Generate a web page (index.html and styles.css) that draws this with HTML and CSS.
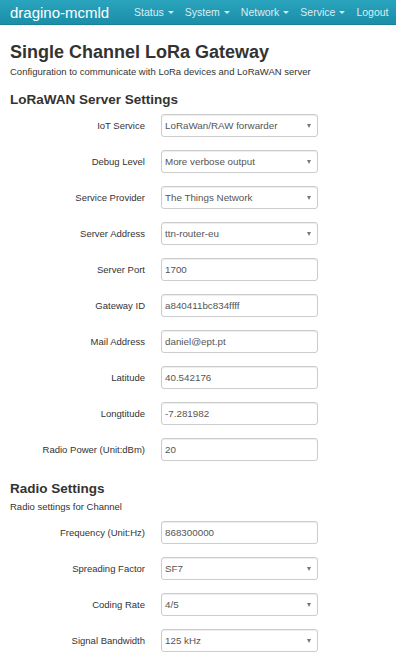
FILE: index.html
```html
<!DOCTYPE html>
<html>
<head>
<meta charset="utf-8">
<link rel="stylesheet" href="styles.css">
</head>
<body>
<header class="navbar">
  <span class="brand">dragino-mcmld</span>
  <nav class="nav">
    <span class="nav-item">Status<i class="caret"></i></span>
    <span class="nav-item">System<i class="caret"></i></span>
    <span class="nav-item">Network<i class="caret"></i></span>
    <span class="nav-item">Service<i class="caret"></i></span>
    <span class="nav-item">Logout</span>
  </nav>
</header>
<main class="content">
  <h1 class="title">Single Channel LoRa Gateway</h1>
  <p class="desc">Configuration to communicate with LoRa devices and LoRaWAN server</p>

  <h2 class="section">LoRaWAN Server Settings</h2>
  <div class="form">
    <div class="row"><label class="label">IoT Service</label><div class="control select">LoRaWan/RAW forwarder<i class="arrow"></i></div></div>
    <div class="row"><label class="label">Debug Level</label><div class="control select">More verbose output<i class="arrow"></i></div></div>
    <div class="row"><label class="label">Service Provider</label><div class="control select">The Things Network<i class="arrow"></i></div></div>
    <div class="row"><label class="label">Server Address</label><div class="control select">ttn-router-eu<i class="arrow"></i></div></div>
    <div class="row"><label class="label">Server Port</label><div class="control">1700</div></div>
    <div class="row"><label class="label">Gateway ID</label><div class="control">a840411bc834ffff</div></div>
    <div class="row"><label class="label">Mail Address</label><div class="control">daniel@ept.pt</div></div>
    <div class="row"><label class="label">Latitude</label><div class="control">40.542176</div></div>
    <div class="row"><label class="label">Longtitude</label><div class="control">-7.281982</div></div>
    <div class="row"><label class="label">Radio Power (Unit:dBm)</label><div class="control">20</div></div>
  </div>

  <h2 class="section section-2">Radio Settings</h2>
  <p class="desc desc-2">Radio settings for Channel</p>
  <div class="form form-2">
    <div class="row"><label class="label">Frequency (Unit:Hz)</label><div class="control">868300000</div></div>
    <div class="row"><label class="label">Spreading Factor</label><div class="control select">SF7<i class="arrow"></i></div></div>
    <div class="row"><label class="label">Coding Rate</label><div class="control select">4/5<i class="arrow"></i></div></div>
    <div class="row"><label class="label">Signal Bandwidth</label><div class="control select">125 kHz<i class="arrow"></i></div></div>
  </div>
</main>
</body>
</html>
```

FILE: styles.css
```css
* { box-sizing: border-box; }
html, body { margin: 0; padding: 0; background: #fff; }
body {
  font-family: "Liberation Sans", Arial, sans-serif;
  color: #333;
  overflow: hidden;
}
.navbar {
  height: 25px;
  display: flex;
  align-items: center;
  padding: 0 2px 0 10px;
  background: linear-gradient(to bottom, #2aa4bd 0%, #1b8ea8 100%);
  border-bottom: 1px solid #187f96;
}
.brand {
  font-size: 15px;
  color: #fff;
  line-height: 25px;
}
.nav {
  margin-left: auto;
  display: flex;
  align-items: center;
}
.nav-item {
  font-size: 10.5px;
  color: #d9eef3;
  padding: 0 5.5px;
  display: inline-flex;
  align-items: center;
  line-height: 25px;
}
.caret {
  display: inline-block;
  width: 0;
  height: 0;
  margin-left: 4px;
  margin-top: 1px;
  border-top: 3px solid #cfe8ee;
  border-left: 3px solid transparent;
  border-right: 3px solid transparent;
}
.content { padding: 0 10px; }
.title {
  margin: 16px 0 0;
  font-size: 18px;
  font-weight: bold;
  line-height: 22px;
  color: #333;
}
.desc {
  margin: 2px 0 0;
  font-size: 9.5px;
  line-height: 13px;
  color: #333;
}
.section {
  margin: 13px 0 0;
  font-size: 13.5px;
  font-weight: bold;
  line-height: 18px;
  color: #333;
}
.section-2 { margin-top: 19px; }
.desc-2 { margin-top: 2px; }
.form {
  display: flex;
  flex-direction: column;
  gap: 13px;
  margin-top: 5px;
}
.form-2 { margin-top: 8px; }
.row {
  display: flex;
  align-items: center;
  gap: 16px;
}
.label {
  width: 135px;
  text-align: right;
  font-size: 9.5px;
  color: #333;
}
.control {
  position: relative;
  width: 157px;
  height: 23px;
  border: 1px solid #ccc;
  border-radius: 3px;
  box-shadow: inset 0 1px 1px rgba(0,0,0,0.075);
  font-size: 9.8px;
  color: #555;
  line-height: 21px;
  padding: 0 3px;
  background: #fff;
}
.arrow {
  position: absolute;
  right: 6px;
  top: 9px;
  width: 0;
  height: 0;
  border-top: 4px solid #777;
  border-left: 2.5px solid transparent;
  border-right: 2.5px solid transparent;
}
```
